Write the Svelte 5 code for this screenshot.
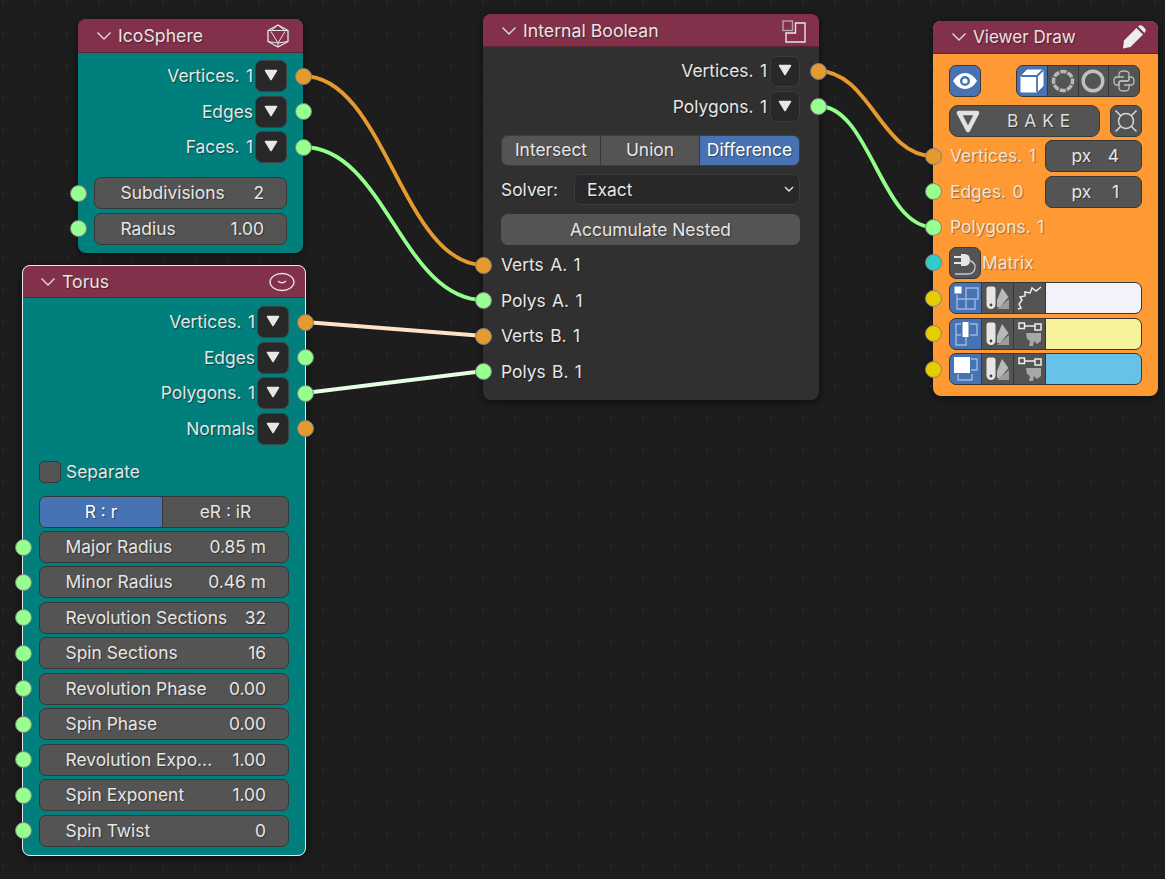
<script>
  const torusFields = [
    ['Major Radius', '0.85 m'],
    ['Minor Radius', '0.46 m'],
    ['Revolution Sections', '32'],
    ['Spin Sections', '16'],
    ['Revolution Phase', '0.00'],
    ['Spin Phase', '0.00'],
    ['Revolution Expo...', '1.00'],
    ['Spin Exponent', '1.00'],
    ['Spin Twist', '0']
  ];
  const colorRows = [
    { kind: 'a', wire: 'edge', color: '#f2f2fa' },
    { kind: 'b', wire: 'mesh', color: '#f5f29b' },
    { kind: 'c', wire: 'mesh', color: '#66c2e8' }
  ];
  const wires = [
    { d: 'M303 76C385 76 402 265 484 265', c: '#e59a2e' },
    { d: 'M303 147C385 147 402 300 484 300', c: '#92ff8a' },
    { d: 'M305 322L484 336', c: '#ffe2c6' },
    { d: 'M305 393L484 371', c: '#e2ffe2' },
    { d: 'M818 71C870 71 881 156 933 156', c: '#e59a2e' },
    { d: 'M818 106C870 106 881 227 933 227', c: '#92ff8a' }
  ];
  const snake = 'M7 9V5Q7 2 12 2Q17 2 17 5V10Q17 12 15 12H9Q7 12 7 14V16H5Q2 16 2 12Q2 8 5 8H12';
</script>

{#snippet chevron()}
  <svg class="chev" viewBox="0 0 16 10" width="16" height="10"><path d="M1.500 1.500L8 8L14.500 1.500" /></svg>
{/snippet}

{#snippet tri()}
  <svg viewBox="0 0 14 12" width="14" height="12"><path d="M1.500 1.500H12.500L7 10.500Z" fill="#e8e8e8" stroke="#e8e8e8" stroke-width="1.500" stroke-linejoin="round" /></svg>
{/snippet}

{#snippet output(label, color, extra = '')}
  <div class="row out {extra}">
    <span class="lbl">{label}</span>
    <span class="drop">{@render tri()}</span>
    <span class="sock right {color}"></span>
  </div>
{/snippet}

{#snippet palette()}
  <svg viewBox="0 0 26 26" width="26" height="26">
    <path d="M12 24L24 14V24Z" fill="#9c9c9c" />
    <path d="M12 15L17 3L23.500 12L15 22L12 22Z" fill="#b8b8b8" />
    <path d="M1.500 4Q1.500 1.500 4 1.500H8Q10.500 1.500 10.500 4V19.500A4.500 4.500 0 0 1 1.500 19.500Z" fill="#e6e6e6" />
    <circle cx="6" cy="20" r="1.400" fill="#444" />
  </svg>
{/snippet}

{#snippet layoutIcon(kind)}
  <svg viewBox="0 0 26 26" width="26" height="26" fill="none" stroke="#9db8df" stroke-width="1.400">
    {#if kind === 'a'}
      <path d="M4 10V24H13V3H25V14H4M13 24H22V14" />
      <rect x="1.500" y="1.500" width="7" height="7" fill="#fff" stroke="none" />
    {:else if kind === 'b'}
      <path d="M8 3H3V14H8M17 3H24V14H17M3 14V24H13V14" />
      <rect x="9.500" y="1" width="6" height="15" fill="#fff" stroke="none" />
    {:else}
      <path d="M18 3H24V14H18M5 18V24H19V18" />
      <rect x="1" y="1" width="16" height="16" fill="#fff" stroke="none" />
    {/if}
  </svg>
{/snippet}

{#snippet wireIcon(kind)}
  {#if kind === 'edge'}
    <svg viewBox="0 0 26 26" width="26" height="26"><path d="M1 24L4 23L2 19L5 15L3 12L8 11L8 7L13 8L15 3L19 6L24 2" fill="none" stroke="#eee" stroke-width="1.500" /></svg>
  {:else}
    <svg viewBox="0 0 26 26" width="26" height="26">
      <path d="M9 12H24V20L20 23L17 20L16 25H12L13 20L10 18Z" fill="#a8a8a8" />
      <path d="M7 5H18" stroke="#eee" stroke-width="1.500" />
      <rect x="2" y="2" width="5.500" height="5.500" fill="none" stroke="#eee" stroke-width="1.500" />
      <rect x="18" y="3" width="6" height="6" fill="none" stroke="#eee" stroke-width="1.500" />
    </svg>
  {/if}
{/snippet}

<div class="canvas">
  <svg class="wires" viewBox="0 0 1165 879" width="1165" height="879">
    {#each wires as w}
      <path d={w.d} fill="none" stroke="#1a1a1a" stroke-width="5.400" opacity="0.6" />
      <path d={w.d} fill="none" stroke={w.c} stroke-width="3.800" />
    {/each}
  </svg>

  <section class="node ico teal">
    <header>
      {@render chevron()}<span class="title">IcoSphere</span>
      <svg class="hicon" viewBox="0 0 24 24" width="24" height="24" fill="none" stroke="#e6e6e6" stroke-width="1.300" stroke-linejoin="round">
        <path d="M12 1L22 6.500V17.500L12 23L2 17.500V6.500Z" />
        <path d="M2 6.500L22 6.500M12 1L5 7M12 1L19 7M5 7.500L12 19L19 7.500M2 17.500L12 19L22 17.500M12 19V23" stroke-width="1" />
      </svg>
    </header>
    <div class="body">
      {@render output('Vertices. 1', 'orange')}
      {@render output('Edges', 'green', 'g35')}
      {@render output('Faces. 1', 'green', 'g35')}
      <div class="row g14"><span class="sock left green"></span><div class="field"><span>Subdivisions</span><span>2</span></div></div>
      <div class="row g35"><span class="sock left green"></span><div class="field"><span>Radius</span><span>1.00</span></div></div>
    </div>
  </section>

  <section class="node torus teal">
    <header>
      {@render chevron()}<span class="title">Torus</span>
      <svg class="hicon" viewBox="0 0 26 20" width="26" height="20" fill="none" stroke="#e6e6e6" stroke-width="1.300">
        <ellipse cx="13" cy="10" rx="12" ry="8.500" />
        <path d="M9 9Q13 12.500 17 9" />
      </svg>
    </header>
    <div class="body">
      {@render output('Vertices. 1', 'orange')}
      {@render output('Edges', 'green', 'g35')}
      {@render output('Polygons. 1', 'green', 'g35')}
      {@render output('Normals', 'orange', 'g35')}
      <div class="check-row"><span class="check"></span><span class="lbl">Separate</span></div>
      <div class="row g13"><div class="seg"><span class="on">R : r</span><span>eR : iR</span></div></div>
      <div class="fields">
        {#each torusFields as [label, value]}
          <div class="row"><span class="sock left green"></span><div class="field"><span>{label}</span><span>{value}</span></div></div>
        {/each}
      </div>
    </div>
  </section>

  <section class="node bool">
    <header>
      {@render chevron()}<span class="title">Internal Boolean</span>
      <svg class="hicon" viewBox="0 0 24 24" width="24" height="24" fill="none" stroke-width="1.400">
        <rect x="1" y="2" width="9.500" height="9.500" stroke="#b5a3ab" />
        <path d="M13.500 4H23V23H4V14H13.500Z" stroke="#e6e6e6" />
      </svg>
    </header>
    <div class="body">
      {@render output('Vertices. 1', 'orange')}
      {@render output('Polygons. 1', 'green', 'g45')}
      <div class="row g13 h30"><div class="seg"><span>Intersect</span><span>Union</span><span class="on">Difference</span></div></div>
      <div class="row g85 solver"><span class="lbl">Solver:</span>
        <div class="select"><span>Exact</span><svg viewBox="0 0 10 7" width="10" height="7"><path d="M1 1L5 5L9 1" fill="none" stroke="#e6e6e6" stroke-width="1.400" /></svg></div>
      </div>
      <div class="row g9"><div class="btn">Accumulate Nested</div></div>
      <div class="inputs">
        <div class="row"><span class="sock left orange"></span><span class="lbl">Verts A. 1</span></div>
        <div class="row g35"><span class="sock left green"></span><span class="lbl">Polys A. 1</span></div>
        <div class="row g35"><span class="sock left orange"></span><span class="lbl">Verts B. 1</span></div>
        <div class="row g35"><span class="sock left green"></span><span class="lbl">Polys B. 1</span></div>
      </div>
    </div>
  </section>

  <section class="node viewer">
    <header>
      {@render chevron()}<span class="title">Viewer Draw</span>
      <svg class="hicon" viewBox="0 0 24 24" width="24" height="24">
        <path d="M1 23.500L2 15.500L14.500 3L21 9.500L8.500 22Z" fill="#eee" />
        <path d="M16 1.500Q18.500 -.5 20.500 1L23 3.500Q24.500 5.500 22.500 8Z" fill="#eee" />
      </svg>
    </header>
    <div class="body">
      <div class="row top spread">
        <span class="square on">
          <svg viewBox="0 0 24 16" width="24" height="16"><path fill-rule="evenodd" d="M0 8Q5 0 12 0T24 8Q19 16 12 16T0 8ZM12 3A5 5 0 1 0 12 13A5 5 0 1 0 12 3Z" fill="#fff" /><circle cx="12" cy="8" r="2.600" fill="#fff" /></svg>
        </span>
        <div class="seg icons">
          <span class="on">
            <svg viewBox="0 0 24 24" width="24" height="24"><path d="M7 1H23V17L17 23H1V7Z" fill="#fff" stroke="#fff" stroke-linejoin="round" /><path d="M1 7H17V23M17 7L23 1" fill="none" stroke="#4772b3" stroke-width="1.800" /></svg>
          </span>
          <span><svg viewBox="0 0 24 24" width="24" height="24"><circle cx="12" cy="12" r="9.500" fill="none" stroke="#b8b8b8" stroke-width="3.500" stroke-dasharray="6.300 1.160" stroke-dashoffset="3" /></svg></span>
          <span><svg viewBox="0 0 24 24" width="24" height="24"><circle cx="12" cy="12" r="9.800" fill="none" stroke="#c0c0c0" stroke-width="3.400" /></svg></span>
          <span><svg viewBox="0 0 24 24" width="24" height="24" fill="none" stroke="#bcbcbc" stroke-width="1.300"><path d={snake} /><path d={snake} transform="rotate(180 12 12)" /></svg></span>
        </div>
      </div>
      <div class="row g8 spread">
        <div class="bake">
          <svg viewBox="0 0 24 24" width="24" height="24"><path d="M3 4H21L12 21Z" fill="none" stroke="#e2e2e2" stroke-width="4.500" stroke-linejoin="round" /></svg>
          <span>B A K E</span>
        </div>
        <span class="square">
          <svg viewBox="0 0 24 24" width="24" height="24" fill="none" stroke="#d8d8d8" stroke-width="1.500"><circle cx="12" cy="12" r="7.500" /><path d="M1.500 1.500L6.500 6.500M22.500 1.500L17.500 6.500M1.500 22.500L6.500 17.500M22.500 22.500L17.500 17.500" /></svg>
        </span>
      </div>
      <div class="row g3 spread pad-lbl"><span class="sock left orange"></span><span class="lbl">Vertices. 1</span><div class="field px"><span>px</span><span>4</span></div></div>
      <div class="row g35 spread pad-lbl"><span class="sock left green"></span><span class="lbl">Edges. 0</span><div class="field px"><span>px</span><span>1</span></div></div>
      <div class="row g35 pad-lbl"><span class="sock left green"></span><span class="lbl">Polygons. 1</span></div>
      <div class="row g3 matrix"><span class="sock left cyan"></span>
        <span class="square">
          <svg viewBox="0 0 26 26" width="26" height="26"><path d="M9 4H12Q18 4 18 10Q18 16 12 16H9Z" fill="#e6e6e6" /><path d="M2 7H9M2 13H9" stroke="#e6e6e6" stroke-width="2" /><path d="M17 10Q24 13 23 18Q22 24 16 24H3" fill="none" stroke="#c8c8c8" stroke-width="1.400" /></svg>
        </span>
        <span class="lbl">Matrix</span>
      </div>
      {#each colorRows as r, i}
        <div class="row {i === 0 ? 'g3' : 'g35'}"><span class="sock left yellow"></span>
          <div class="seg colors">
            <span class="on">{@render layoutIcon(r.kind)}</span>
            <span>{@render palette()}</span>
            <span>{@render wireIcon(r.wire)}</span>
            <i style:background={r.color}></i>
          </div>
        </div>
      {/each}
    </div>
  </section>
</div>

<style>
  :global(body) { margin: 0; background: #1d1d1d; }
  .canvas {
    position: relative;
    width: 1165px;
    height: 879px;
    overflow: hidden;
    background-color: #1d1d1d;
    background-image: radial-gradient(circle at 3px 2px, #2c2c2c 1px, transparent 1.4px);
    background-size: 32px 32px;
    font-family: Inter, "Liberation Sans", sans-serif;
    font-size: 17.4px;
    color: #e6e6e6;
  }
  .wires { position: absolute; left: 0; top: 0; }
  .node {
    position: absolute;
    box-sizing: border-box;
    border-radius: 8px;
    box-shadow: 0 2px 9px rgba(0, 0, 0, 0.55);
  }
  .ico { left: 78px; top: 19px; width: 225px; height: 234px; }
  .torus { left: 22px; top: 265px; width: 284px; height: 591px; outline: 1.5px solid #e8e8e8; outline-offset: -1.5px; }
  .bool { left: 483px; top: 14px; width: 336px; height: 386px; background: #303030; }
  .viewer { left: 933px; top: 21px; width: 225px; height: 375px; background: #ff9933; }
  .teal { background: #007f7c; }

  header {
    display: flex;
    align-items: center;
    box-sizing: border-box;
    height: 34px;
    padding: 0 13px 0 18px;
    background: #83304a;
    border-radius: 8px 8px 0 0;
    border-bottom: 1px solid rgba(30, 30, 30, 0.45);
  }
  .torus header { height: 33px; padding: 1px 11px 0 18px; }
  .bool header { height: 33px; padding-top: 1px; }
  .viewer header { height: 33px; padding: 0 12px 1px 18px; }
  .viewer .title { font-size: 17.1px; }
  .chev { flex: none; margin-right: 6px; }
  .chev path { fill: none; stroke: #dcdcdc; stroke-width: 1.4; }
  .title { font-size: 17.7px; text-shadow: 1px 1px 1px rgba(0, 0, 0, 0.4); color: #e4e4e4; }
  .hicon { margin-left: auto; }

  .body { display: flex; flex-direction: column; padding-top: 7px; }
  .torus .body { padding-top: 8px; }
  .bool .body { padding-top: 8.5px; }
  .viewer .body { padding-top: 11px; }

  .row {
    position: relative;
    display: flex;
    align-items: center;
    flex: none;
    box-sizing: border-box;
    height: 32px;
    padding: 0 16px;
  }
  .torus .row, .torus .check-row { padding: 0 17px; }
  .bool .row { padding: 0 19px 0 18px; height: 31px; }
  .bool .row.h30 { height: 30.5px; }
  .out { justify-content: flex-end; gap: 2px; }
  .bool .out { gap: 3px; }
  .g3 { margin-top: 3px; }
  .g35 { margin-top: 3.5px; }
  .g45 { margin-top: 4.5px; }
  .g8 { margin-top: 8px; }
  .g85 { margin-top: 8.5px; }
  .g9 { margin-top: 9px; }
  .g13 { margin-top: 13px; }
  .g14 { margin-top: 14px; }
  .spread { justify-content: space-between; }
  .lbl { padding-bottom: 1px; text-shadow: 1px 1px 1px rgba(0, 0, 0, 0.45); white-space: nowrap; word-spacing: 1.5px; }
  .solver .lbl { padding-bottom: 0; }
  .viewer .lbl { color: #ebe4da; text-shadow: 1px 1px 1px rgba(0, 0, 0, 0.35); }
  .pad-lbl .lbl { margin-left: 1px; }

  .drop {
    display: flex;
    align-items: center;
    justify-content: center;
    flex: none;
    box-sizing: border-box;
    width: 32px;
    height: 32px;
    padding-bottom: 2px;
    background: #282828;
    border: 1px solid #3c4544;
    border-radius: 7px;
  }
  .bool .drop { width: 30px; height: 31px; border-color: #3d3d3d; }

  .sock {
    position: absolute;
    top: 50%;
    box-sizing: border-box;
    width: 17px;
    height: 17px;
    margin-top: -8.5px;
    border: 1.8px solid #808080;
    border-radius: 50%;
    z-index: 2;
  }
  .sock.left { left: -8.5px; }
  .sock.right { right: -8.5px; }
  .torus .sock.left { left: -7.5px; }
  .torus .sock.right { right: -7.5px; }
  .bool .sock.right { right: -7.5px; }
  .orange { background: #e59a2e; }
  .green { background: #96ff90; }
  .cyan { background: #2fcccc; }
  .yellow { background: #e6cc00; }

  .field {
    display: flex;
    justify-content: space-between;
    align-items: center;
    flex: 1;
    box-sizing: border-box;
    height: 32px;
    padding: 0 22px 1px 25.5px;
    background: #545454;
    border: 1px solid #373737;
    border-radius: 7px;
    text-shadow: 1px 1px 1px rgba(0, 0, 0, 0.4);
    white-space: nowrap;
  }
  .field.px { flex: none; width: 97px; }
  .fields { display: flex; flex-direction: column; gap: 3.45px; margin-top: 3px; }

  .check-row { display: flex; align-items: center; gap: 5px; height: 22px; margin-top: 16.5px; }
  .check {
    box-sizing: border-box;
    width: 22px;
    height: 22px;
    background: #545454;
    border: 1px solid #373737;
    border-radius: 5px;
  }

  .seg {
    display: flex;
    flex: 1;
    height: 100%;
    box-sizing: border-box;
    background: #545454;
    border: 1px solid #373737;
    border-radius: 7px;
    overflow: hidden;
    text-shadow: 1px 1px 1px rgba(0, 0, 0, 0.4);
  }
  .seg span {
    display: flex;
    align-items: center;
    justify-content: center;
    flex: 1 1 0;
    box-sizing: border-box;
    padding-bottom: 1px;
    border-left: 1px solid #373737;
  }
  .seg span:first-child { border-left: 0; }
  .seg .on { background: #4772b3; color: #fff; }
  .bool .seg { border-color: #3d3d3d; }
  .bool .seg span:nth-child(3) { flex: 0 0 100px; }
  .torus .seg .on { flex: 0 0 122px; }

  .solver { justify-content: space-between; }
  .select {
    display: flex;
    align-items: center;
    justify-content: space-between;
    box-sizing: border-box;
    width: 226px;
    height: 31px;
    padding: 0 5px 0 12px;
    background: #282828;
    border: 1px solid #3d3d3d;
    border-radius: 7px;
    text-shadow: 1px 1px 1px rgba(0, 0, 0, 0.4);
  }
  .btn {
    display: flex;
    align-items: center;
    justify-content: center;
    flex: 1;
    height: 31px;
    background: #545454;
    border-radius: 7px;
    text-shadow: 1px 1px 1px rgba(0, 0, 0, 0.4);
  }
  .inputs { margin-top: 4px; }
  .bool .inputs .row { height: 32px; }

  .square {
    display: flex;
    align-items: center;
    justify-content: center;
    flex: none;
    box-sizing: border-box;
    width: 32px;
    height: 32px;
    background: #545454;
    border: 1px solid #3a3a3a;
    border-radius: 7px;
  }
  .square.on { background: #4772b3; }
  .icons { flex: none; width: 124px; margin-right: 2px; }
  .bake {
    display: flex;
    align-items: center;
    box-sizing: border-box;
    width: 151px;
    height: 32px;
    padding-left: 6px;
    padding-bottom: 1px;
    background: #545454;
    border: 1px solid #3a3a3a;
    border-radius: 9px;
    color: #dcdcdc;
    text-shadow: 1px 1px 1px rgba(0, 0, 0, 0.4);
  }
  .bake span { margin-left: 27px; word-spacing: 1px; white-space: nowrap; }
  .matrix { height: 33px; gap: 1px; }
  .colors span { flex: none; width: 32px; padding-bottom: 0; }
  .colors span:first-child { width: 31px; }
  .colors i { flex: 1; border-left: 1px solid #373737; }
</style>
